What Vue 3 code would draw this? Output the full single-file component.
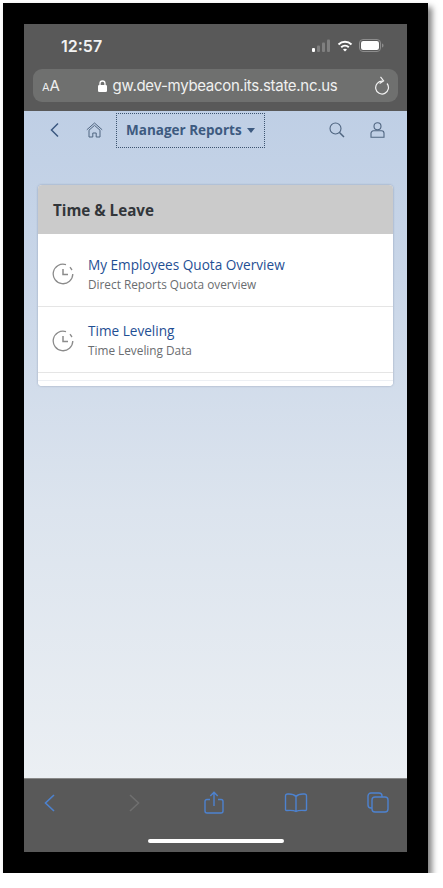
<script setup>
const rows = [
  { title: 'My Employees Quota Overview', sub: 'Direct Reports Quota overview' },
  { title: 'Time Leveling', sub: 'Time Leveling Data' },
]
</script>

<template>
  <div class="frame">
    <div class="screen">
      <header class="chrome">
        <div class="status">
          <span class="time">12:57</span>
          <div class="status-icons">
            <svg width="19" height="13" viewBox="0 0 19 13">
              <rect x="0" y="9" width="3" height="4" rx="1" fill="#fff" />
              <rect x="5" y="6.500" width="3" height="6.500" rx="1" fill="#7f7f7f" />
              <rect x="10" y="3.500" width="3" height="9.500" rx="1" fill="#7f7f7f" />
              <rect x="15" y="0.500" width="3" height="12.500" rx="1" fill="#7f7f7f" />
            </svg>
            <svg width="16" height="12" viewBox="0 0 16 12" fill="none" stroke="#fff" stroke-width="2">
              <path d="M1.500 4.400C5.200 .9 10.800 .9 14.500 4.400" />
              <path d="M4.200 7.200C6.400 5.200 9.600 5.200 11.800 7.200" />
              <path d="M8 11.500 6 9.400C7.200 8.500 8.800 8.500 10 9.400Z" fill="#fff" stroke="none" />
            </svg>
            <svg width="25" height="13" viewBox="0 0 25 13" fill="none">
              <rect x=".5" y=".5" width="21" height="12" rx="3.500" stroke="#8d8d8d" />
              <rect x="2" y="2" width="18" height="9" rx="2.200" fill="#fff" />
              <path d="M23 4.500c1 .3 1.500 1 1.500 2s-.5 1.700-1.500 2z" fill="#8d8d8d" />
            </svg>
          </div>
        </div>
        <div class="url-bar">
          <span class="aa"><small>A</small>A</span>
          <div class="address">
            <svg width="9" height="12" viewBox="0 0 9 12" fill="none">
              <path d="M2 5.500V3.500a2.500 2.500 0 0 1 5 0v2" stroke="#fff" stroke-width="1.300" />
              <rect y="5" width="9" height="7" rx="1.300" fill="#fff" />
            </svg>
            <span>gw.dev-mybeacon.its.state.nc.us</span>
          </div>
          <svg class="reload" width="15" height="19" viewBox="0 0 15 19" fill="none" stroke="#f2f2f2" stroke-width="1.200">
            <path d="M12 7.500A6.400 6.400 0 1 1 7.500 5.200" />
            <path d="M5.500 .8 8.600 4.800 4.600 7.600" />
          </svg>
        </div>
      </header>

      <main class="content">
        <nav class="shell">
          <svg class="i-back" width="11" height="16" viewBox="0 0 11 16" fill="none" stroke="#3b5880" stroke-width="1.500">
            <path d="M9 1.500 2.500 8 9 14.500" />
          </svg>
          <svg class="i-home" width="17" height="16" viewBox="0 0 17 16" fill="none" stroke="#4f6580" stroke-width="1">
            <path d="M.8 7.800 8.500 1l7.700 6.800" />
            <path d="M3 8.200 8.500 3.400 14 8.200" />
            <path d="M3 8.200V15h3.800v-4h3.400v4H14V8.200" />
          </svg>
          <button class="menu">
            <span>Manager Reports</span>
            <i class="caret"></i>
          </button>
          <span class="spacer"></span>
          <svg class="i-search" width="16" height="16" viewBox="0 0 16 16" fill="none" stroke="#4f6580" stroke-width="1.100">
            <circle cx="6.500" cy="6.500" r="5.500" />
            <path d="M10.500 10.500 15 15" stroke-width="1.500" />
          </svg>
          <svg class="i-user" width="15" height="16" viewBox="0 0 15 16" fill="none" stroke="#4f6580" stroke-width="1.100">
            <circle cx="7.500" cy="4.200" r="3.500" />
            <path d="M3.500 8.800h8A2.500 2.500 0 0 1 14 11.300V15.300H1V11.300A2.500 2.500 0 0 1 3.500 8.800Z" />
          </svg>
        </nav>

        <section class="card">
          <h2 class="card-head">Time &amp; Leave</h2>
          <div v-for="row in rows" :key="row.title" class="row">
            <svg class="clock" width="22" height="22" viewBox="0 0 22 22" fill="none" stroke="#8b8b8b" stroke-width="1.300">
              <path d="M14 1.600A9.800 9.800 0 1 0 20.800 11" />
              <path d="M18 4.200 20 7" />
              <path d="M11 6v5.500h5" stroke-width="1.500" />
            </svg>
            <div class="row-text">
              <div class="row-title">{{ row.title }}</div>
              <div class="row-sub">{{ row.sub }}</div>
            </div>
          </div>
          <div class="row-stub"></div>
        </section>
      </main>

      <footer class="toolbar">
        <div class="tools">
          <svg width="14" height="20" viewBox="0 0 14 20" fill="none" stroke="#4d82cf" stroke-width="1.600">
            <path d="M11 2 2.500 10 11 18" />
          </svg>
          <svg class="t-forward" width="14" height="20" viewBox="0 0 14 20" fill="none" stroke="#6f6f6f" stroke-width="1.600">
            <path d="M3 2 11.500 10 3 18" />
          </svg>
          <svg class="t-share" width="20" height="23" viewBox="0 0 20 23" fill="none" stroke="#4d82cf" stroke-width="1.400">
            <path d="M6 8.500H3A2 2 0 0 0 1 10.500V20A2 2 0 0 0 3 22H17A2 2 0 0 0 19 20V10.500A2 2 0 0 0 17 8.500H14" />
            <path d="M10 15V1.500M6.300 5 10 1.300 13.700 5" />
          </svg>
          <svg class="t-book" width="24" height="20" viewBox="0 0 24 20" fill="none" stroke="#4d82cf" stroke-width="1.400">
            <path d="M12 3.500C10.500 1.800 8 1 5 1H3.500A2 2 0 0 0 1.500 3V16.500C1.500 17.200 2 17.500 2.700 17.500 6 17.200 9.800 17 12 18.500 14.200 17 18 17.200 21.300 17.500 22 17.500 22.500 17.200 22.500 16.500V3A2 2 0 0 0 20.500 1H19C16 1 13.500 1.800 12 3.500ZM12 3.500V18.500" />
          </svg>
          <svg class="t-tabs" width="22" height="21" viewBox="0 0 22 21" fill="none" stroke="#4d82cf" stroke-width="1.400">
            <path d="M5 16H4A3 3 0 0 1 1 13V4A3 3 0 0 1 4 1H12A3 3 0 0 1 15 4V5" />
            <rect x="5" y="5" width="16" height="15" rx="3" />
          </svg>
        </div>
        <div class="home-bar"></div>
      </footer>
    </div>
  </div>
</template>

<style scoped>
.frame {
  box-sizing: border-box;
  width: 425px;
  height: 870px;
  margin: 3px 0 0 3px;
  padding: 21px;
  background: #000;
  box-shadow: 4px 4px 6px rgba(0, 0, 0, 0.5);
}
.screen {
  display: flex;
  flex-direction: column;
  height: 100%;
  font-family: "Open Sans", "Noto Sans", sans-serif;
}
.chrome {
  height: 87px;
  box-sizing: border-box;
  padding: 0 9px;
  background: #595959;
  color: #fff;
  font-family: Inter, "Liberation Sans", sans-serif;
}
.status {
  display: flex;
  align-items: center;
  justify-content: space-between;
  height: 45px;
  padding: 0 14px 2px 28px;
  box-sizing: border-box;
}
.time {
  font-size: 16px;
  font-weight: 600;
  color: #f2f2f2;
}
.status-icons {
  display: flex;
  align-items: center;
  gap: 6px;
}
.url-bar {
  display: flex;
  align-items: center;
  height: 33px;
  padding: 0 8px 0 9px;
  border-radius: 9px;
  background: #6f706f;
}
.aa {
  width: 18px;
  font-size: 15px;
  color: #eee;
  white-space: nowrap;
}
.aa small {
  font-size: 11px;
}
.address {
  flex: 1;
  display: flex;
  align-items: center;
  justify-content: center;
  gap: 6px;
  font-size: 15px;
  letter-spacing: -0.3px;
  color: #f0f0f0;
  white-space: nowrap;
}
.reload {
  flex: none;
}
.content {
  flex: 1;
  background: linear-gradient(#bfcfe5 0, #c9d6e8 25%, #dce4ee 60%, #ebeff3 100%);
}
.shell {
  display: flex;
  align-items: center;
  height: 38px;
  padding: 0 22px 0 25px;
}
.i-home {
  margin-left: 26px;
}
.menu {
  display: flex;
  align-items: center;
  gap: 5px;
  box-sizing: border-box;
  height: 35px;
  margin-left: 13px;
  padding: 0 9px;
  border: 1px dotted #3c5470;
  background: transparent;
  color: #3d5a80;
  font: 700 13.500px "Open Sans", sans-serif;
  white-space: nowrap;
}
.caret {
  width: 0;
  height: 0;
  border: 4.500px solid transparent;
  border-top: 5px solid #3d5a80;
  border-bottom: 0;
}
.spacer {
  flex: 1;
}
.i-search {
  margin-right: 25px;
}
.card {
  margin: 36px 14px 0;
  border-radius: 4px;
  background: #fff;
  overflow: hidden;
  box-shadow: 0 0 2px rgba(70, 90, 120, 0.5);
}
.card-head {
  box-sizing: border-box;
  height: 49px;
  margin: 0;
  padding: 0 15px;
  background: #cbcbcb;
  color: #32363a;
  font-size: 15.200px;
  font-weight: 700;
  line-height: 51px;
}
.row {
  display: flex;
  align-items: center;
  box-sizing: border-box;
  height: 66px;
  padding: 2px 15px 0 14px;
  border-bottom: 1px solid #e5e5e5;
}
.row:first-of-type {
  height: 73px;
  padding-top: 8px;
}
.clock {
  flex: none;
}
.row-text {
  margin-left: 14px;
}
.row-title {
  color: #1f4f94;
  font-size: 13.600px;
  line-height: 20px;
  white-space: nowrap;
}
.row-sub {
  color: #6a6d70;
  font-size: 11.800px;
  line-height: 19px;
  white-space: nowrap;
}
.row-stub {
  height: 13px;
  box-sizing: border-box;
  border-bottom: 5px solid #fff;
  box-shadow: inset 0 -1px 0 #eceff3;
}
.toolbar {
  height: 74px;
  box-sizing: border-box;
  border-top: 1px solid #888;
  background: #595959;
}
.tools {
  display: flex;
  align-items: center;
  height: 47px;
  padding-left: 19px;
}
.t-forward {
  margin-left: 70px;
}
.t-share {
  margin-left: 63px;
}
.t-book {
  margin-left: 60px;
}
.t-tabs {
  margin-left: 59px;
}
.home-bar {
  width: 136px;
  height: 4px;
  margin: 13px auto 0;
  border-radius: 2px;
  background: #fff;
}
</style>

<style>
html, body {
  margin: 0;
  background: #fff;
}
</style>
